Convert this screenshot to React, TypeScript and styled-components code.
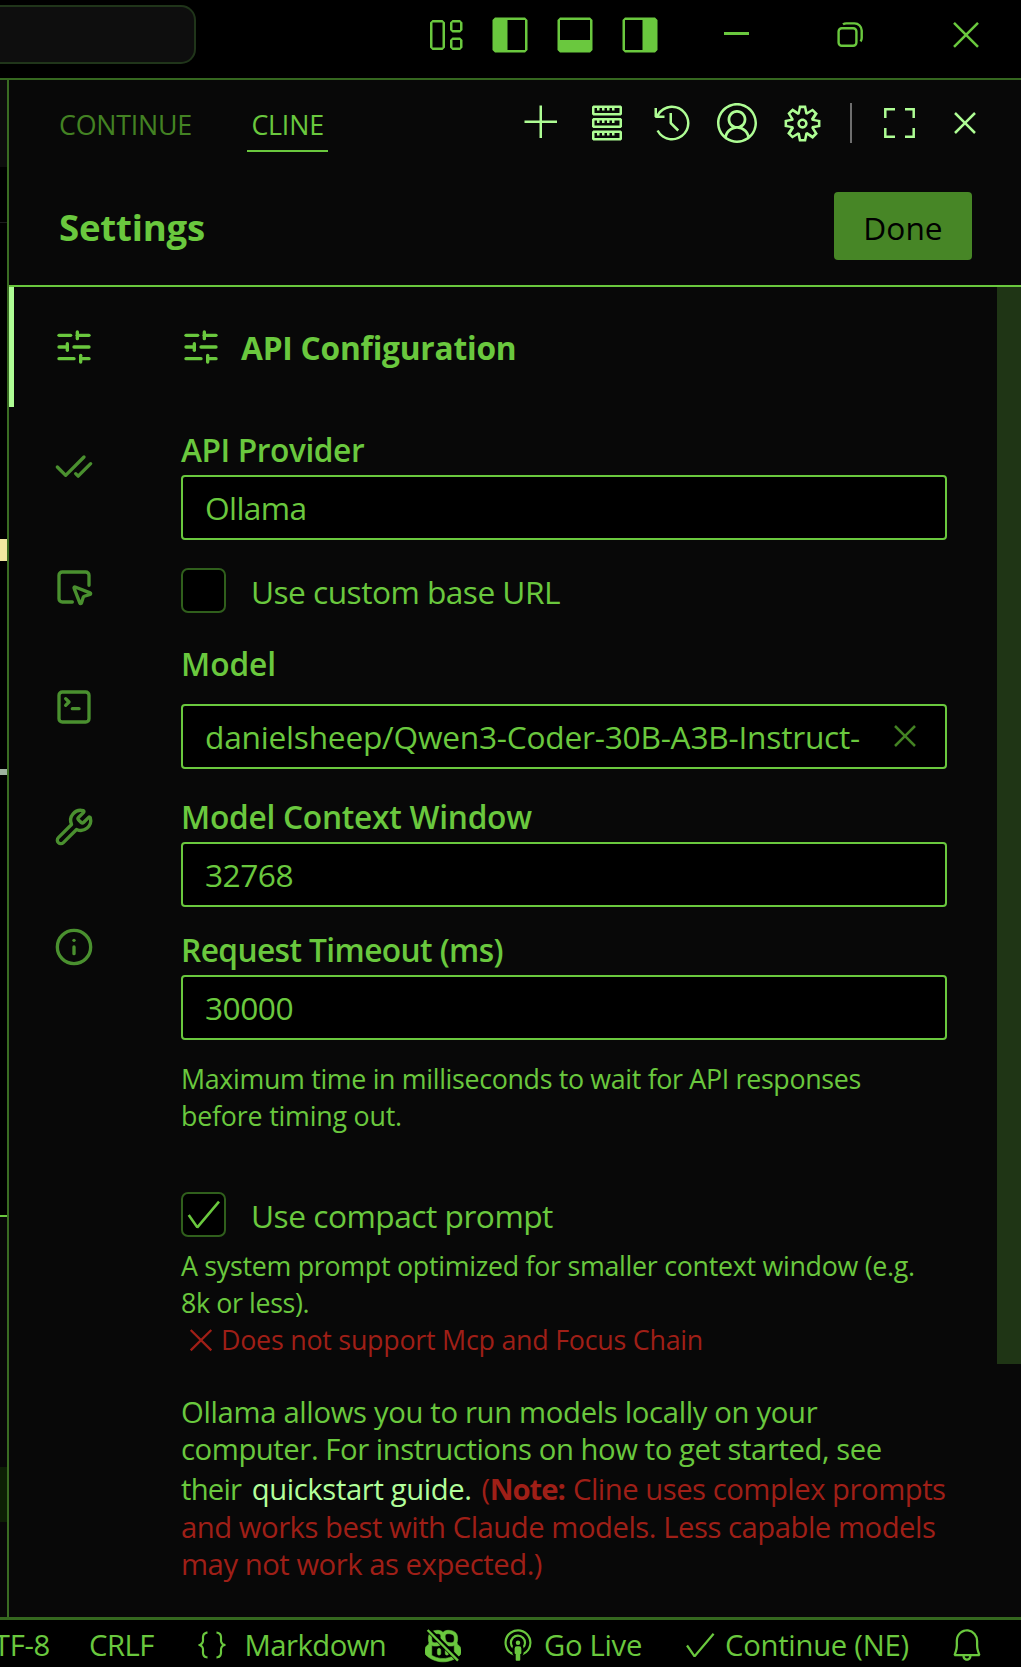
import React from "react";
import styled, { createGlobalStyle, css } from "styled-components";
import {
  VscAccount,
  VscAdd,
  VscBell,
  VscBroadcast,
  VscCheck,
  VscClose,
  VscCopilot,
  VscGear,
  VscHistory,
  VscJson,
  VscLayout,
  VscLayoutPanel,
  VscLayoutSidebarLeft,
  VscLayoutSidebarRight,
  VscServer,
} from "react-icons/vsc";
import { CheckCheck, Info, SlidersHorizontal, SquareMousePointer, SquareTerminal, Wrench } from "lucide-react";

const color = {
  text: "#6ac83e",
  bright: "#aefd94",
  muted: "#438223",
  nav: "#4a902f",
  line: "#35671f",
  box: "#305f1c",
  error: "#9f1f17",
  panel: "#080808",
};

const GlobalStyle = createGlobalStyle`
  * { box-sizing: border-box; }
  html, body { margin: 0; background: #000; }
  body { overflow: hidden; }
  svg { display: block; flex: none; }
`;

const Window = styled.div`
  display: flex;
  flex-direction: column;
  width: 1021px;
  height: 1667px;
  overflow: hidden;
  background: #000;
  color: ${color.text};
  font-family: "Open Sans", "Noto Sans", sans-serif;
  white-space: nowrap;
`;

/* Title bar */
const TitleBar = styled.header`
  display: flex;
  align-items: center;
  height: 80px;
  flex: none;
  padding-bottom: 8px;
  border-bottom: 2px solid ${color.line};
`;

const CommandCenter = styled.div`
  width: 196px;
  height: 59px;
  margin-top: -2px;
  background: #0e0e0e;
  border: 2px solid #20351a;
  border-left: 0;
  border-radius: 0 15px 15px 0;
`;

const LayoutActions = styled.div`
  display: flex;
  gap: 25px;
  margin-left: auto;
`;

const WindowControls = styled.div`
  display: flex;
  margin: 0 -2px 0 19.5px;
`;

const WindowButton = styled.div`
  display: flex;
  width: 114.5px;
  height: 50px;
  align-items: center;
  justify-content: center;
`;

const MinimizeBar = styled.div`
  width: 25px;
  height: 3px;
  margin-bottom: 3px;
  background: ${color.text};
`;

/* Body */
const Workbench = styled.div`
  display: flex;
  flex: 1;
  min-height: 0;
`;

const EditorEdge = styled.div`
  display: flex;
  flex-direction: column;
  width: 7px;
`;

const EdgeMark = styled.div<{ $h: number; $bg: string }>`
  flex: none;
  height: ${(p) => p.$h}px;
  background: ${(p) => p.$bg};
`;

const Panel = styled.main`
  display: flex;
  flex-direction: column;
  flex: 1;
  min-width: 0;
  border-left: 2px solid #3a6c23;
  background: ${color.panel};
`;

const PanelTabs = styled.div`
  display: flex;
  align-items: center;
  justify-content: space-between;
  height: 86px;
  padding: 0 36px 0 46px;
`;

const TabList = styled.div`
  display: flex;
  gap: 51.5px;
`;

const Tab = styled.div<{ $active?: boolean; $track: number }>`
  height: 58px;
  padding: 5px 4px 0;
  border-bottom: 2px solid ${(p) => (p.$active ? color.text : "transparent")};
  color: ${(p) => (p.$active ? color.text : color.muted)};
  font-size: 26.8px;
  line-height: 51px;
  letter-spacing: ${(p) => p.$track}px;
`;

const Toolbar = styled.div`
  display: flex;
  align-items: center;
  gap: 25px;
  color: ${color.bright};
`;

const Separator = styled.div`
  width: 2px;
  height: 40px;
  margin: 0 3px 0 2px;
  background: #6e6e6e;
`;

const SettingsHeader = styled.div`
  display: flex;
  align-items: center;
  justify-content: space-between;
  height: 121px;
  padding: 0 49px 0 50px;
  border-bottom: 2px solid ${color.text};
`;

const PageTitle = styled.h1`
  margin: 0;
  padding-top: 2px;
  font-size: 36.6px;
  font-weight: 700;
  line-height: 50px;
  letter-spacing: -0.2px;
`;

const DoneButton = styled.button`
  width: 138px;
  height: 68px;
  padding: 4px 0 0;
  border: 0;
  border-radius: 4px;
  background: #478626;
  color: #000;
  font: 400 31.7px/60px "Open Sans", sans-serif;
`;

const SettingsBody = styled.div`
  display: flex;
  flex: 1;
  min-height: 0;
`;

const Nav = styled.nav`
  width: 130px;
  flex: none;
`;

const NavItem = styled.div<{ $active?: boolean }>`
  display: flex;
  align-items: center;
  justify-content: center;
  height: 120px;
  color: ${(p) => (p.$active ? color.text : color.nav)};
  ${(p) =>
    p.$active &&
    css`
      padding-right: 5px;
      border-left: 5px solid ${color.bright};
    `}
`;

const Content = styled.section`
  flex: 1;
  min-width: 0;
  padding: 38px 50px 0 42px;
`;

const ScrollTrack = styled.div`
  width: 24px;
  flex: none;
`;

const ScrollThumb = styled.div`
  height: 1077px;
  background: #1f3515;
`;

const SectionHeading = styled.h2`
  display: flex;
  align-items: center;
  gap: 20px;
  height: 44px;
  margin: 0 0 61px;
  font-size: 31.7px;
  font-weight: 700;
  letter-spacing: -0.22px;
`;

const Label = styled.label<{ $track: number; $gap?: number; $drop?: number }>`
  display: block;
  height: 40px;
  margin-bottom: ${(p) => p.$gap ?? 5}px;
  padding-top: ${(p) => p.$drop ?? 0}px;
  font-size: 31.7px;
  font-weight: 600;
  line-height: 40px;
  letter-spacing: ${(p) => p.$track}px;
`;

const Field = styled.div<{ $track: number; $after: number }>`
  display: flex;
  align-items: center;
  justify-content: space-between;
  height: 65px;
  margin-bottom: ${(p) => p.$after}px;
  padding: 1px 20px 0 22px;
  border: 2px solid ${color.text};
  border-radius: 4px;
  background: #000;
  font-size: 31.7px;
  line-height: 44px;
  letter-spacing: ${(p) => p.$track}px;

  svg {
    margin-bottom: 3px;
    color: ${color.muted};
  }
`;

const CheckRow = styled.div<{ $track: number; $after: number }>`
  display: flex;
  gap: 25px;
  height: 45px;
  margin-bottom: ${(p) => p.$after}px;
  font-size: 31.7px;
  line-height: 47px;
  letter-spacing: ${(p) => p.$track}px;
`;

const CheckBox = styled.span`
  display: flex;
  align-items: center;
  justify-content: center;
  width: 45px;
  height: 45px;
  border: 2px solid ${color.box};
  border-radius: 7px;
  background: #000;
`;

const Hint = styled.div<{ $after: number; $leading: number }>`
  margin-bottom: ${(p) => p.$after}px;
  font-size: 26.8px;
  line-height: ${(p) => p.$leading}px;
`;

const Line = styled.div<{ $track: number; $h?: number; $error?: boolean }>`
  display: flex;
  align-items: center;
  letter-spacing: ${(p) => p.$track}px;
  ${(p) => p.$h && `height: ${p.$h}px; line-height: ${p.$h}px;`}
  ${(p) => p.$error && `color: ${color.error};`}
`;

const ProviderNote = styled.div`
  font-size: 29.25px;
`;

const Run = styled.span<{ $track: number; $before?: number; $error?: boolean }>`
  margin-left: ${(p) => p.$before ?? 0}px;
  letter-spacing: ${(p) => p.$track}px;
  ${(p) => p.$error && `color: ${color.error};`}
`;

const GuideLink = styled(Run).attrs({ as: "a" })`
  color: #b2ff9b;
  font-weight: 500;
`;

const StrongRun = styled(Run).attrs({ as: "b" })`
  font-weight: 700;
`;

/* Status bar */
const StatusBar = styled.footer`
  display: flex;
  flex: none;
  align-items: center;
  gap: 39px;
  height: 50px;
  padding-top: 2px;
  border-top: 3px solid ${color.line};
  font-size: 29.25px;
  line-height: 40px;
`;

const StatusItem = styled.div<{ $w: number; $gap?: number; $track?: number; $end?: boolean }>`
  display: flex;
  flex: none;
  align-items: center;
  gap: ${(p) => p.$gap ?? 0}px;
  width: ${(p) => p.$w}px;
  letter-spacing: ${(p) => p.$track ?? 0}px;
  ${(p) => p.$end && "justify-content: flex-end;"}
`;

const RestoreIcon = () => (
  <svg width="28" height="26" viewBox="0 0 28 26" fill="none" stroke="currentColor" strokeWidth="2.4">
    <rect x="1.6" y="6.2" width="17.8" height="17.6" rx="3.2" />
    <path d="M6 2.4C7 1.6 8 1.4 9.5 1.4H17.5a7.2 7.2 0 0 1 7.2 7.2V16c0 1.5-.4 2.5-1.2 3.4" />
  </svg>
);

const CloseWindowIcon = () => (
  <svg width="26" height="28" viewBox="0 0 26 28" fill="none" stroke="currentColor" strokeWidth="2.5">
    <path d="M1 1.9 25 25.9M25 1.9 1 25.9" />
  </svg>
);

const FullScreenIcon = () => (
  <svg width="40" height="40" viewBox="0 0 40 40" fill="none" stroke="currentColor" strokeWidth="2.5">
    <path d="M5.3 15V6.3H15M25 6.3h8.7V15M33.7 25v8.7H25M15 33.7H5.3V25" />
  </svg>
);

const CrossIcon = () => (
  <svg width="40" height="36" viewBox="0 0 40 36" fill="none" stroke="currentColor" strokeWidth="2.3">
    <path d="M9.7 9 30.3 29.4M30.3 9 9.7 29.4" />
  </svg>
);

const CopilotBlockedIcon = () => (
  <svg width="36" height="36" viewBox="0 0 36 36" fill="none">
    <g stroke="currentColor">
      <VscCopilot size={36} strokeWidth={0.25} />
    </g>
    <path d="M2 1.5 35 34.5" stroke="#000" strokeWidth="5.2" />
    <path d="M2.6 3 33 33.6" stroke="currentColor" strokeWidth="2.4" />
  </svg>
);

const NAV_ICONS = [SlidersHorizontal, CheckCheck, SquareMousePointer, SquareTerminal, Wrench, Info];

const EDGE_MARKS: [number, string][] = [
  [87, "#0d0d0d"],
  [55, "#000"],
  [1, "#1c1c1c"],
  [316, "#000"],
  [22, "#f0e8a0"],
  [208, "#000"],
  [6, "#9fb39f"],
  [440, "#000"],
  [2, color.text],
  [250, color.panel],
  [55, "#0d1f05"],
  [95, color.panel],
];

export default function App() {
  return (
    <Window>
      <GlobalStyle />
      <TitleBar>
        <CommandCenter />
        <LayoutActions>
          <VscLayout size={40} />
          <VscLayoutSidebarLeft size={40} />
          <VscLayoutPanel size={40} />
          <VscLayoutSidebarRight size={40} />
        </LayoutActions>
        <WindowControls>
          <WindowButton>
            <MinimizeBar />
          </WindowButton>
          <WindowButton>
            <RestoreIcon />
          </WindowButton>
          <WindowButton>
            <CloseWindowIcon />
          </WindowButton>
        </WindowControls>
      </TitleBar>

      <Workbench>
        <EditorEdge>
          {EDGE_MARKS.map(([h, bg], i) => (
            <EdgeMark key={i} $h={h} $bg={bg} />
          ))}
        </EditorEdge>
        <Panel>
          <PanelTabs>
            <TabList>
              <Tab $track={-0.23}>CONTINUE</Tab>
              <Tab $active $track={-0.2}>
                CLINE
              </Tab>
            </TabList>
            <Toolbar>
              <VscAdd size={40} />
              <VscServer size={40} />
              <VscHistory size={40} />
              <VscAccount size={40} />
              <VscGear size={41} />
              <Separator />
              <FullScreenIcon />
              <VscClose size={40} />
            </Toolbar>
          </PanelTabs>

          <SettingsHeader>
            <PageTitle>Settings</PageTitle>
            <DoneButton>Done</DoneButton>
          </SettingsHeader>

          <SettingsBody>
            <Nav>
              {NAV_ICONS.map((Icon, i) => (
                <NavItem key={i} $active={i === 0}>
                  <Icon size={40} />
                </NavItem>
              ))}
            </Nav>

            <Content>
              <SectionHeading>
                <SlidersHorizontal size={40} />
                API Configuration
              </SectionHeading>

              <Label $track={-0.42}>API Provider</Label>
              <Field $track={-0.6} $after={28}>
                Ollama
              </Field>

              <CheckRow $track={-0.54} $after={30}>
                <CheckBox />
                Use custom base URL
              </CheckRow>

              <Label $track={-0.05} $gap={21} $drop={1}>
                Model
              </Label>
              <Field $track={-0.24} $after={28}>
                danielsheep/Qwen3-Coder-30B-A3B-Instruct-
                <VscClose size={40} />
              </Field>

              <Label $track={-0.26}>Model Context Window</Label>
              <Field $track={-0.5} $after={23}>
                32768
              </Field>

              <Label $track={-0.6}>Request Timeout (ms)</Label>
              <Field $track={-0.5} $after={20}>
                30000
              </Field>

              <Hint $after={58} $leading={37}>
                <Line $track={-0.33}>Maximum time in milliseconds to wait for API responses</Line>
                <Line $track={-0.2}>before timing out.</Line>
              </Hint>

              <CheckRow $track={-0.5} $after={11}>
                <CheckBox>
                  <VscCheck size={41} />
                </CheckBox>
                Use compact prompt
              </CheckRow>
              <Hint $after={36.5} $leading={36.5}>
                <Line $track={-0.28}>A system prompt optimized for smaller context window (e.g.</Line>
                <Line $track={-0.38} $h={36}>
                  8k or less).
                </Line>
                <Line $track={-0.23} $h={37} $error>
                  <CrossIcon />
                  Does not support Mcp and Focus Chain
                </Line>
              </Hint>

              <ProviderNote>
                <Line $h={37} $track={-0.33}>
                  Ollama allows you to run models locally on your
                </Line>
                <Line $h={37} $track={-0.43}>
                  computer. For instructions on how to get started, see
                </Line>
                <Line $h={42} $track={-0.5}>
                  <Run $track={-0.8}>their</Run>
                  <GuideLink $track={-0.38} $before={10.5}>
                    quickstart guide.
                  </GuideLink>
                  <Run $track={-0.5} $before={10} $error>
                    (
                  </Run>
                  <StrongRun $track={-1} $error>
                    Note:
                  </StrongRun>
                  <Run $track={-0.48} $before={8} $error>
                    Cline uses complex prompts
                  </Run>
                </Line>
                <Line $h={35} $track={-0.47} $error>
                  and works best with Claude models. Less capable models
                </Line>
                <Line $h={38} $track={-0.47} $error>
                  may not work as expected.)
                </Line>
              </ProviderNote>
            </Content>

            <ScrollTrack>
              <ScrollThumb />
            </ScrollTrack>
          </SettingsBody>
        </Panel>
      </Workbench>

      <StatusBar>
        <StatusItem $w={50} $end $track={-0.3}>
          UTF-8
        </StatusItem>
        <StatusItem $w={66} $track={-0.5}>
          CRLF
        </StatusItem>
        <StatusItem $w={192} $gap={14.5} $track={-0.53}>
          <VscJson size={36} />
          Markdown
        </StatusItem>
        <StatusItem $w={36}>
          <CopilotBlockedIcon />
        </StatusItem>
        <StatusItem $w={143} $gap={8} $track={-0.3}>
          <VscBroadcast size={36} />
          Go Live
        </StatusItem>
        <StatusItem $w={228} $gap={7} $track={-0.26}>
          <VscCheck size={36} />
          Continue (NE)
        </StatusItem>
        <StatusItem $w={36}>
          <VscBell size={36} />
        </StatusItem>
      </StatusBar>
    </Window>
  );
}
